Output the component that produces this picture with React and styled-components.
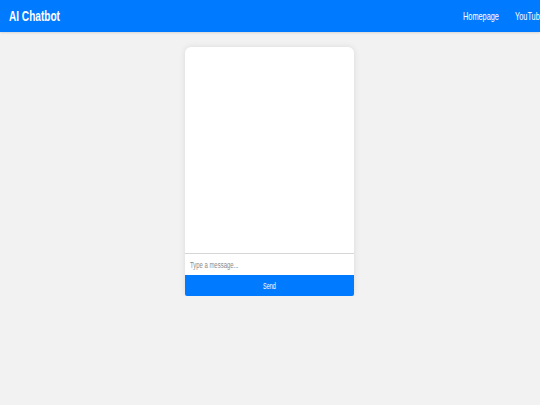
import React, { useState } from "react";
import styled, { createGlobalStyle } from "styled-components";

const GlobalStyle = createGlobalStyle`
  html, body {
    margin: 0;
    padding: 0;
    background: #f2f2f2;
    font-family: "Liberation Sans", Arial, sans-serif;
  }
`;

export default function App() {
  const [message, setMessage] = useState("");

  return (
    <>
      <GlobalStyle />
      <Header>
        <Title>
          <Squeeze>AI Chatbot</Squeeze>
        </Title>
        <Nav>
          <NavLink href="#">
            <Squeeze>Homepage</Squeeze>
          </NavLink>
          <NavLink href="#">
            <Squeeze>YouTube</Squeeze>
          </NavLink>
        </Nav>
      </Header>
      <Main>
        <ChatCard>
          <Messages />
          <Input
            placeholder="Type a message..."
            value={message}
            onChange={(e) => setMessage(e.target.value)}
          />
          <SendButton>
            <Squeeze>Send</Squeeze>
          </SendButton>
        </ChatCard>
      </Main>
    </>
  );
}

const Squeeze = styled.span`
  display: inline-block;
  transform: scaleX(0.65);
  transform-origin: left center;
  white-space: nowrap;
`;

const Header = styled.header`
  height: 32px;
  background-color: #007bff;
  display: flex;
  align-items: center;
  padding-left: 9px;
  overflow: hidden;
  box-shadow: 0 1px 2px rgba(0, 0, 0, 0.12);
`;

const Title = styled.h1`
  margin: 0;
  font-size: 15.5px;
  font-weight: bold;
  color: #fff;
  width: 60px;
`;

const Nav = styled.nav`
  display: flex;
  gap: 18px;
  margin-left: auto;
  margin-right: -9px;
`;

const NavLink = styled.a`
  display: block;
  color: #fff;
  text-decoration: none;
  font-size: 11.3px;
  width: 34px;
`;

const Main = styled.main`
  display: flex;
  justify-content: center;
  padding-top: 15px;
`;

const ChatCard = styled.div`
  width: 169px;
  margin-right: 1px;
  background: #fff;
  border-radius: 6px;
  box-shadow: 0 0 6px rgba(0, 0, 0, 0.1);
  display: flex;
  flex-direction: column;
`;

const Messages = styled.div`
  height: 206px;
  border-bottom: 1px solid #d6d6d6;
`;

const Input = styled.input`
  box-sizing: border-box;
  width: 241px;
  height: 21px;
  align-self: flex-start;
  transform: scaleX(0.7);
  transform-origin: left center;
  border: none;
  outline: none;
  padding: 0 7px;
  font-family: "Liberation Sans", Arial, sans-serif;
  font-size: 8.5px;
  color: #333;
  background: transparent;

  &::placeholder {
    color: #8a8a8a;
  }
`;

const SendButton = styled.button`
  height: 21px;
  border: none;
  background-color: #007bff;
  color: #fff;
  font-family: "Liberation Sans", Arial, sans-serif;
  font-size: 8.5px;
  cursor: pointer;
  padding: 0 0 0 78px;
  text-align: left;
  border-radius: 0 0 2px 2px;
`;
